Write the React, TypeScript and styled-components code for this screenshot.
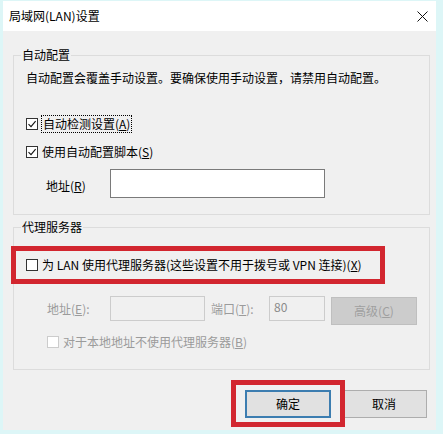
import React from 'react'
import styled, { createGlobalStyle } from 'styled-components'

const GlobalStyle = createGlobalStyle`
  html, body {
    margin: 0;
    padding: 0;
    background: #ddf6f7;
  }
  body {
    font-family: "Noto Sans CJK SC", "Noto Sans", sans-serif;
    font-size: 12px;
    color: #000;
  }
`

const CheckMark = () => (
  <svg width="10" height="10" viewBox="0 0 10 10">
    <path d="M1.5 5.2 L4 7.6 L8.6 2.2" fill="none" stroke="#111" strokeWidth="1.1" />
  </svg>
)

const Checkbox: React.FC<{ checked?: boolean; disabled?: boolean }> = ({ checked, disabled }) => (
  <Box $disabled={disabled}>{checked && <CheckMark />}</Box>
)

export default function App() {
  return (
    <>
      <GlobalStyle />
      <Frame>
        <Window>
          <TitleBar>
            <Title>局域网(LAN)设置</Title>
            <svg width="11" height="11" viewBox="0 0 11 11">
              <path d="M0.5 0.5 L10.5 10.5 M10.5 0.5 L0.5 10.5" stroke="#111" strokeWidth="1" />
            </svg>
          </TitleBar>
          <Body>
            <Group $pb={14}>
              <Legend>自动配置</Legend>
              <Text $mt={7}>自动配置会覆盖手动设置。要确保使用手动设置，请禁用自动配置。</Text>
              <CheckRow $mt={30}>
                <Checkbox checked />
                <Focus>自动检测设置(<Key>A</Key>)</Focus>
              </CheckRow>
              <CheckRow $mt={12}>
                <Checkbox checked />
                <span>使用自动配置脚本(<Key>S</Key>)</span>
              </CheckRow>
              <FieldRow $mt={9} $indent={20}>
                <FieldLabel $w={64} $h={29} $pt={2}>地址(<Key>R</Key>)</FieldLabel>
                <Input $w={215} $h={29} />
              </FieldRow>
            </Group>

            <Group $pb={19} $mt={4}>
              <Legend>代理服务器</Legend>
              <Highlight $inset="-11px -15px" $mt={22} $w={344}>
                <CheckRow>
                  <Checkbox />
                  <span>为 LAN 使用代理服务器(这些设置不用于拨号或 VPN 连接)(<Key>X</Key>)</span>
                </CheckRow>
              </Highlight>
              <FieldRow $mt={23} $indent={21} $disabled>
                <FieldLabel $w={63} $h={25}>地址(<Key>E</Key>):</FieldLabel>
                <Input $w={95} $h={25} $disabled />
                <FieldLabel $w={58} $h={25} $ml={6}>端口(<Key>T</Key>):</FieldLabel>
                <Input $w={56} $h={25} $disabled>80</Input>
                <Button $disabled $ml={6} $mt={1}>高级(<Key>C</Key>)</Button>
              </FieldRow>
              <CheckRow $mt={9} $indent={21} $disabled>
                <Checkbox disabled />
                <span>对于本地地址不使用代理服务器(<Key>B</Key>)</span>
              </CheckRow>
            </Group>

            <Footer>
              <Highlight $inset="-10px -14px -9px -14px">
                <Button $primary>确定</Button>
              </Highlight>
              <Button>取消</Button>
            </Footer>
          </Body>
        </Window>
      </Frame>
    </>
  )
}

const Frame = styled.div`
  display: flex;
  width: 443px;
  height: 434px;
  box-sizing: border-box;
  padding: 1px 7px 4px 3px;
`

const Window = styled.div`
  flex: 1;
  display: flex;
  flex-direction: column;
  background: #f0f0f0;
`

const TitleBar = styled.div`
  height: 30px;
  flex: none;
  background: #fff;
  display: flex;
  align-items: center;
  justify-content: space-between;
  padding: 0 8px 0 6px;
`

const Title = styled.span`
  font-size: 12px;
  line-height: 16px;
`

const Body = styled.div`
  flex: 1;
  display: flex;
  flex-direction: column;
  padding: 16px 6px 0 10px;
`

const Group = styled.fieldset<{ $pb: number; $mt?: number }>`
  margin: ${p => p.$mt ?? 0}px 0 0 0;
  padding: 0 0 ${p => p.$pb}px 12px;
  border: 1px solid #dcdcdc;
  min-width: 0;
  display: flex;
  flex-direction: column;
`

const Legend = styled.legend`
  margin-left: -5px;
  padding: 0 1px;
  font-size: 12px;
  line-height: 16px;
`

const Text = styled.div<{ $mt?: number }>`
  margin-top: ${p => p.$mt ?? 0}px;
  line-height: 16px;
`

const CheckRow = styled.label<{ $mt?: number; $indent?: number; $disabled?: boolean }>`
  display: flex;
  align-items: center;
  gap: 4px;
  margin-top: ${p => p.$mt ?? 0}px;
  padding-left: ${p => p.$indent ?? 0}px;
  line-height: 16px;
  color: ${p => (p.$disabled ? '#9b9b9b' : '#000')};
  white-space: nowrap;
`

const Box = styled.span<{ $disabled?: boolean }>`
  width: 12px;
  height: 12px;
  box-sizing: border-box;
  flex: none;
  display: inline-flex;
  align-items: center;
  justify-content: center;
  background: #fff;
  border: 1px solid ${p => (p.$disabled ? '#cccccc' : '#333')};
`

const Focus = styled.span`
  padding: 0 1px;
  outline: 1px dotted #000;
  outline-offset: 0;
`

const Key = styled.span`
  text-decoration: underline;
`

const FieldRow = styled.div<{ $mt?: number; $indent?: number; $disabled?: boolean }>`
  display: flex;
  align-items: flex-start;
  margin-top: ${p => p.$mt ?? 0}px;
  padding-left: ${p => p.$indent ?? 0}px;
  color: ${p => (p.$disabled ? '#9b9b9b' : '#000')};
`

const FieldLabel = styled.span<{ $w: number; $h: number; $pt?: number; $ml?: number }>`
  width: ${p => p.$w}px;
  flex: none;
  margin-left: ${p => p.$ml ?? 0}px;
  padding-top: ${p => p.$pt ?? 0}px;
  line-height: ${p => p.$h}px;
  white-space: nowrap;
`

const Input = styled.div<{ $w: number; $h: number; $disabled?: boolean }>`
  width: ${p => p.$w}px;
  height: ${p => p.$h}px;
  box-sizing: border-box;
  flex: none;
  padding: 3px 4px;
  line-height: 14px;
  background: ${p => (p.$disabled ? '#f0f0f0' : '#fff')};
  border: 1px solid ${p => (p.$disabled ? '#cccccc' : '#7a7a7a')};
  color: #8a8a8a;
`

const Button = styled.div<{ $primary?: boolean; $disabled?: boolean; $ml?: number; $mt?: number }>`
  width: 86px;
  height: 28px;
  box-sizing: border-box;
  flex: none;
  display: flex;
  align-items: center;
  justify-content: center;
  margin-left: ${p => p.$ml ?? 0}px;
  margin-top: ${p => p.$mt ?? 0}px;
  background: ${p => (p.$disabled ? '#cccccc' : '#e1e1e1')};
  border: ${p => (p.$primary ? '2px solid #3c7db0' : p.$disabled ? '1px solid #bfbfbf' : '1px solid #adadad')};
  color: ${p => (p.$disabled ? '#9f9f9f' : '#000')};
  line-height: 16px;
`

const Highlight = styled.div<{ $inset: string; $mt?: number; $w?: number }>`
  position: relative;
  display: flex;
  align-self: flex-start;
  width: ${p => (p.$w ? `${p.$w}px` : 'auto')};
  margin-top: ${p => p.$mt ?? 0}px;

  &::after {
    content: '';
    position: absolute;
    inset: ${p => p.$inset};
    border: 5px solid #d2262f;
    pointer-events: none;
  }
`

const Footer = styled.div`
  display: flex;
  justify-content: flex-end;
  gap: 10px;
  margin-top: 20px;
  padding-right: 3px;
`
